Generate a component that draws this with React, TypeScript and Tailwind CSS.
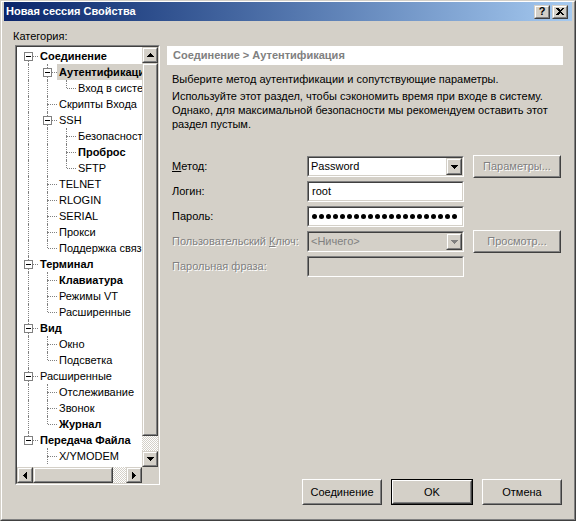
import React from 'react';

type Row = {
  t: string;
  lv: number;
  g: boolean[];
  first?: boolean;
  last?: boolean;
  kids?: boolean;
  b?: boolean;
  sel?: boolean;
};

const rows: Row[] = [
  { t: 'Соединение', lv: 0, g: [], first: true, kids: true, b: true },
  { t: 'Аутентификация', lv: 1, g: [true], kids: true, b: true, sel: true },
  { t: 'Вход в систему', lv: 2, g: [true, true], last: true },
  { t: 'Скрипты Входа', lv: 1, g: [true] },
  { t: 'SSH', lv: 1, g: [true], kids: true },
  { t: 'Безопасность', lv: 2, g: [true, true] },
  { t: 'Проброс', lv: 2, g: [true, true], b: true },
  { t: 'SFTP', lv: 2, g: [true, true], last: true },
  { t: 'TELNET', lv: 1, g: [true] },
  { t: 'RLOGIN', lv: 1, g: [true] },
  { t: 'SERIAL', lv: 1, g: [true] },
  { t: 'Прокси', lv: 1, g: [true] },
  { t: 'Поддержка связи', lv: 1, g: [true], last: true },
  { t: 'Терминал', lv: 0, g: [], kids: true, b: true },
  { t: 'Клавиатура', lv: 1, g: [true], b: true },
  { t: 'Режимы VT', lv: 1, g: [true] },
  { t: 'Расширенные', lv: 1, g: [true], last: true },
  { t: 'Вид', lv: 0, g: [], kids: true, b: true },
  { t: 'Окно', lv: 1, g: [true] },
  { t: 'Подсветка', lv: 1, g: [true], last: true },
  { t: 'Расширенные', lv: 0, g: [], kids: true },
  { t: 'Отслеживание', lv: 1, g: [true] },
  { t: 'Звонок', lv: 1, g: [true] },
  { t: 'Журнал', lv: 1, g: [true], last: true, b: true },
  { t: 'Передача Файла', lv: 0, g: [], kids: true, b: true, last: true },
  { t: 'X/YMODEM', lv: 1, g: [false] },
];

// small pixel triangles used on scroll / combo buttons
function Tri({ dir, gray }: { dir: 'up' | 'down' | 'left' | 'right'; gray?: boolean }) {
  const steps = [0, 1, 2, 3];
  const vert = dir === 'up' || dir === 'down';
  const fill = gray ? '#808080' : '#000';
  return (
    <svg width={vert ? 7 : 4} height={vert ? 4 : 7} shapeRendering="crispEdges" className="block">
      {steps.map((i) => {
        const k = dir === 'up' || dir === 'left' ? 3 - i : i;
        return vert ? (
          <rect key={i} x={k} y={i} width={7 - 2 * k} height={1} fill={fill} />
        ) : (
          <rect key={i} x={i} y={k} width={1} height={7 - 2 * k} fill={fill} />
        );
      })}
    </svg>
  );
}

function Raised({ className = '', children }: { className?: string; children?: React.ReactNode }) {
  return (
    <div className={`shrink-0 border border-t-[#d4d0c8] border-l-[#d4d0c8] border-r-[#404040] border-b-[#404040] ${className}`}>
      <div className="flex h-full w-full items-center justify-center border border-t-white border-l-white border-r-[#808080] border-b-[#808080] bg-[#d4d0c8]">
        {children}
      </div>
    </div>
  );
}

function Sunken({ className = '', inner = '', children }: { className?: string; inner?: string; children?: React.ReactNode }) {
  return (
    <div className={`shrink-0 border border-t-[#808080] border-l-[#808080] border-r-white border-b-white ${className}`}>
      <div className={`h-full w-full border border-t-[#404040] border-l-[#404040] border-r-[#d4d0c8] border-b-[#d4d0c8] ${inner}`}>
        {children}
      </div>
    </div>
  );
}

function Button({ children, className = '', disabled }: { children: React.ReactNode; className?: string; disabled?: boolean }) {
  return (
    <div className={`shrink-0 border border-t-white border-l-white border-r-[#404040] border-b-[#404040] ${className}`}>
      <div
        className={`flex h-full w-full items-center justify-center border border-t-[#d4d0c8] border-l-[#d4d0c8] border-r-[#808080] border-b-[#808080] bg-[#d4d0c8] ${
          disabled ? 'text-[#808080] [text-shadow:1px_1px_0_#fff]' : ''
        }`}
      >
        {children}
      </div>
    </div>
  );
}

function Cell({ row, level }: { row: Row; level: number }) {
  if (level < row.lv) {
    return (
      <div className="relative h-[16px] w-[19px] shrink-0">
        {row.g[level] && <div className="absolute left-[9px] top-0 h-[16px] border-l border-dotted border-[#808080]" />}
      </div>
    );
  }
  return (
    <div className="relative h-[16px] w-[19px] shrink-0">
      {!row.first && <div className="absolute left-[9px] top-0 h-[8px] border-l border-dotted border-[#808080]" />}
      {!row.last && <div className="absolute left-[9px] top-[8px] h-[8px] border-l border-dotted border-[#808080]" />}
      <div className="absolute left-[10px] top-[8px] w-[9px] border-t border-dotted border-[#808080]" />
      {row.kids && (
        <div className="absolute left-[5px] top-[4px] flex h-[9px] w-[9px] items-center justify-center border border-[#808080] bg-white">
          <div className="h-[1px] w-[5px] bg-black" />
        </div>
      )}
    </div>
  );
}

function Tree() {
  return (
    <Sunken className="ml-[2px] mt-[2px] h-[440px] w-[145px]" inner="grid grid-cols-[1fr_16px] grid-rows-[1fr_16px] bg-white">
      <div className="overflow-hidden pl-[2px] pt-[1px]">
        {rows.map((r, i) => (
          <div key={i} className="flex h-[16px] items-center whitespace-nowrap">
            {Array.from({ length: r.lv + 1 }).map((_, l) => (
              <Cell key={l} row={r} level={l} />
            ))}
            <span className={`h-[16px] pl-[2px] pr-[2px] leading-[16px] ${r.b ? 'font-bold' : ''} ${r.sel ? 'bg-[#d4d0c8]' : ''}`}>{r.t}</span>
          </div>
        ))}
      </div>
      <div className="flex flex-col">
        <Raised className="h-[16px] w-[16px]">
          <Tri dir="up" />
        </Raised>
        <Raised className="h-[373px] w-[16px]" />
        <div className="flex-1 bg-[image:repeating-conic-gradient(#ffffff_0_25%,#d4d0c8_0_50%)] bg-[length:2px_2px]" />
        <Raised className="h-[16px] w-[16px]">
          <Tri dir="down" />
        </Raised>
      </div>
      <div className="flex">
        <Raised className="h-[16px] w-[16px]">
          <Tri dir="left" />
        </Raised>
        <Raised className="h-[16px] w-[80px]" />
        <div className="flex-1 bg-[image:repeating-conic-gradient(#ffffff_0_25%,#d4d0c8_0_50%)] bg-[length:2px_2px]" />
        <Raised className="h-[16px] w-[16px]">
          <Tri dir="right" />
        </Raised>
      </div>
      <div className="bg-[#d4d0c8]" />
    </Sunken>
  );
}

function Combo({ value, disabled }: { value: string; disabled?: boolean }) {
  return (
    <Sunken className="h-[21px] w-[157px]" inner={`flex items-center ${disabled ? 'bg-[#d4d0c8]' : 'bg-white'}`}>
      <span className={`flex-1 pl-[2px] ${disabled ? 'text-[#808080]' : ''}`}>{value}</span>
      <Raised className="h-[17px] w-[16px]">
        <Tri dir="down" gray={disabled} />
      </Raised>
    </Sunken>
  );
}

function Field({ children, disabled }: { children?: React.ReactNode; disabled?: boolean }) {
  return (
    <Sunken className="h-[21px] w-[157px]" inner={`flex items-center pl-[3px] ${disabled ? 'bg-[#d4d0c8]' : 'bg-white'}`}>
      {children}
    </Sunken>
  );
}

export default function App() {
  const dim = 'text-[#808080] [text-shadow:1px_1px_0_#fff]';
  return (
    <div className="h-[521px] w-[576px] overflow-hidden font-['Liberation_Sans',Arial,sans-serif] text-[11px] text-black">
      <div className="h-full w-full border border-t-[#d4d0c8] border-l-[#d4d0c8] border-r-[#404040] border-b-[#404040]">
        <div className="flex h-full w-full flex-col border border-t-white border-l-white border-r-[#808080] border-b-[#808080] bg-[#d4d0c8] px-[2px]">
          {/* title bar */}
          <div className="flex h-[19px] shrink-0 items-center bg-linear-to-r from-[#0a246a] to-[#a6caf0] pl-[2px] pr-[4px]">
            <span className="flex-1 font-bold text-white">Новая сессия Свойства</span>
            <Raised className="h-[14px] w-[16px]">
              <span className="text-[11px] font-bold leading-none">?</span>
            </Raised>
            <Raised className="ml-[2px] h-[14px] w-[16px]">
              <svg width="8" height="7" shapeRendering="crispEdges" className="block">
                <path d="M0 0h2l2 2 2-2h2L5 3.5 8 7H6L4 5 2 7H0l3-3.5z" fill="#000" />
              </svg>
            </Raised>
          </div>

          <div className="flex flex-1">
            {/* categories */}
            <div className="flex w-[163px] shrink-0 flex-col pl-[9px]">
              <div className="mt-[8px] h-[14px] leading-[14px]">Категория:</div>
              <Tree />
            </div>

            {/* page */}
            <div className="flex flex-1 flex-col pb-[14px] pr-[9px]">
              <div className="mt-[25px] flex h-[19px] items-center bg-white pl-[6px] font-bold text-[#808080]">
                Соединение &gt; Аутентификация
              </div>
              <div className="mt-[7px] pl-[5px] leading-[14px]">Выберите метод аутентификации и сопутствующие параметры.</div>
              <div className="mt-[3px] whitespace-nowrap pl-[5px] leading-[14px]">
                Используйте этот раздел, чтобы сэкономить время при входе в систему.
                <br />
                Однако, для максимальной безопасности мы рекомендуем оставить этот
                <br />
                раздел пустым.
              </div>

              <div className="mt-[25px] flex flex-col gap-[4px] pl-[5px]">
                <div className="flex h-[21px] items-center">
                  <span className="w-[135px]">
                    <span className="underline">М</span>етод:
                  </span>
                  <Combo value="Password" />
                  <Button className="ml-[9px] h-[23px] w-[88px]" disabled>
                    Параметры...
                  </Button>
                </div>
                <div className="flex h-[21px] items-center">
                  <span className="w-[135px]">Логин:</span>
                  <Field>root</Field>
                </div>
                <div className="flex h-[21px] items-center">
                  <span className="w-[135px]">Пароль:</span>
                  <Field>
                    <div className="flex gap-[2px]">
                      {Array.from({ length: 21 }).map((_, i) => (
                        <span key={i} className="h-[5px] w-[5px] rounded-full bg-black" />
                      ))}
                    </div>
                  </Field>
                </div>
                <div className="flex h-[21px] items-center">
                  <span className={`w-[135px] whitespace-nowrap ${dim}`}>
                    Пользовательский <span className="underline">К</span>люч:
                  </span>
                  <Combo value="<Ничего>" disabled />
                  <Button className="ml-[9px] h-[23px] w-[88px]" disabled>
                    Просмотр...
                  </Button>
                </div>
                <div className="flex h-[21px] items-center">
                  <span className={`w-[135px] ${dim}`}>Парольная фраза:</span>
                  <Field disabled />
                </div>
              </div>

              <div className="mt-auto flex justify-end gap-[9px] pr-[1px]">
                <Button className="h-[26px] w-[80px]">Соединение</Button>
                <div className="h-[26px] w-[82px] border border-black">
                  <Button className="h-full w-full">OK</Button>
                </div>
                <Button className="h-[26px] w-[80px]">Отмена</Button>
              </div>
            </div>
          </div>
        </div>
      </div>
    </div>
  );
}
